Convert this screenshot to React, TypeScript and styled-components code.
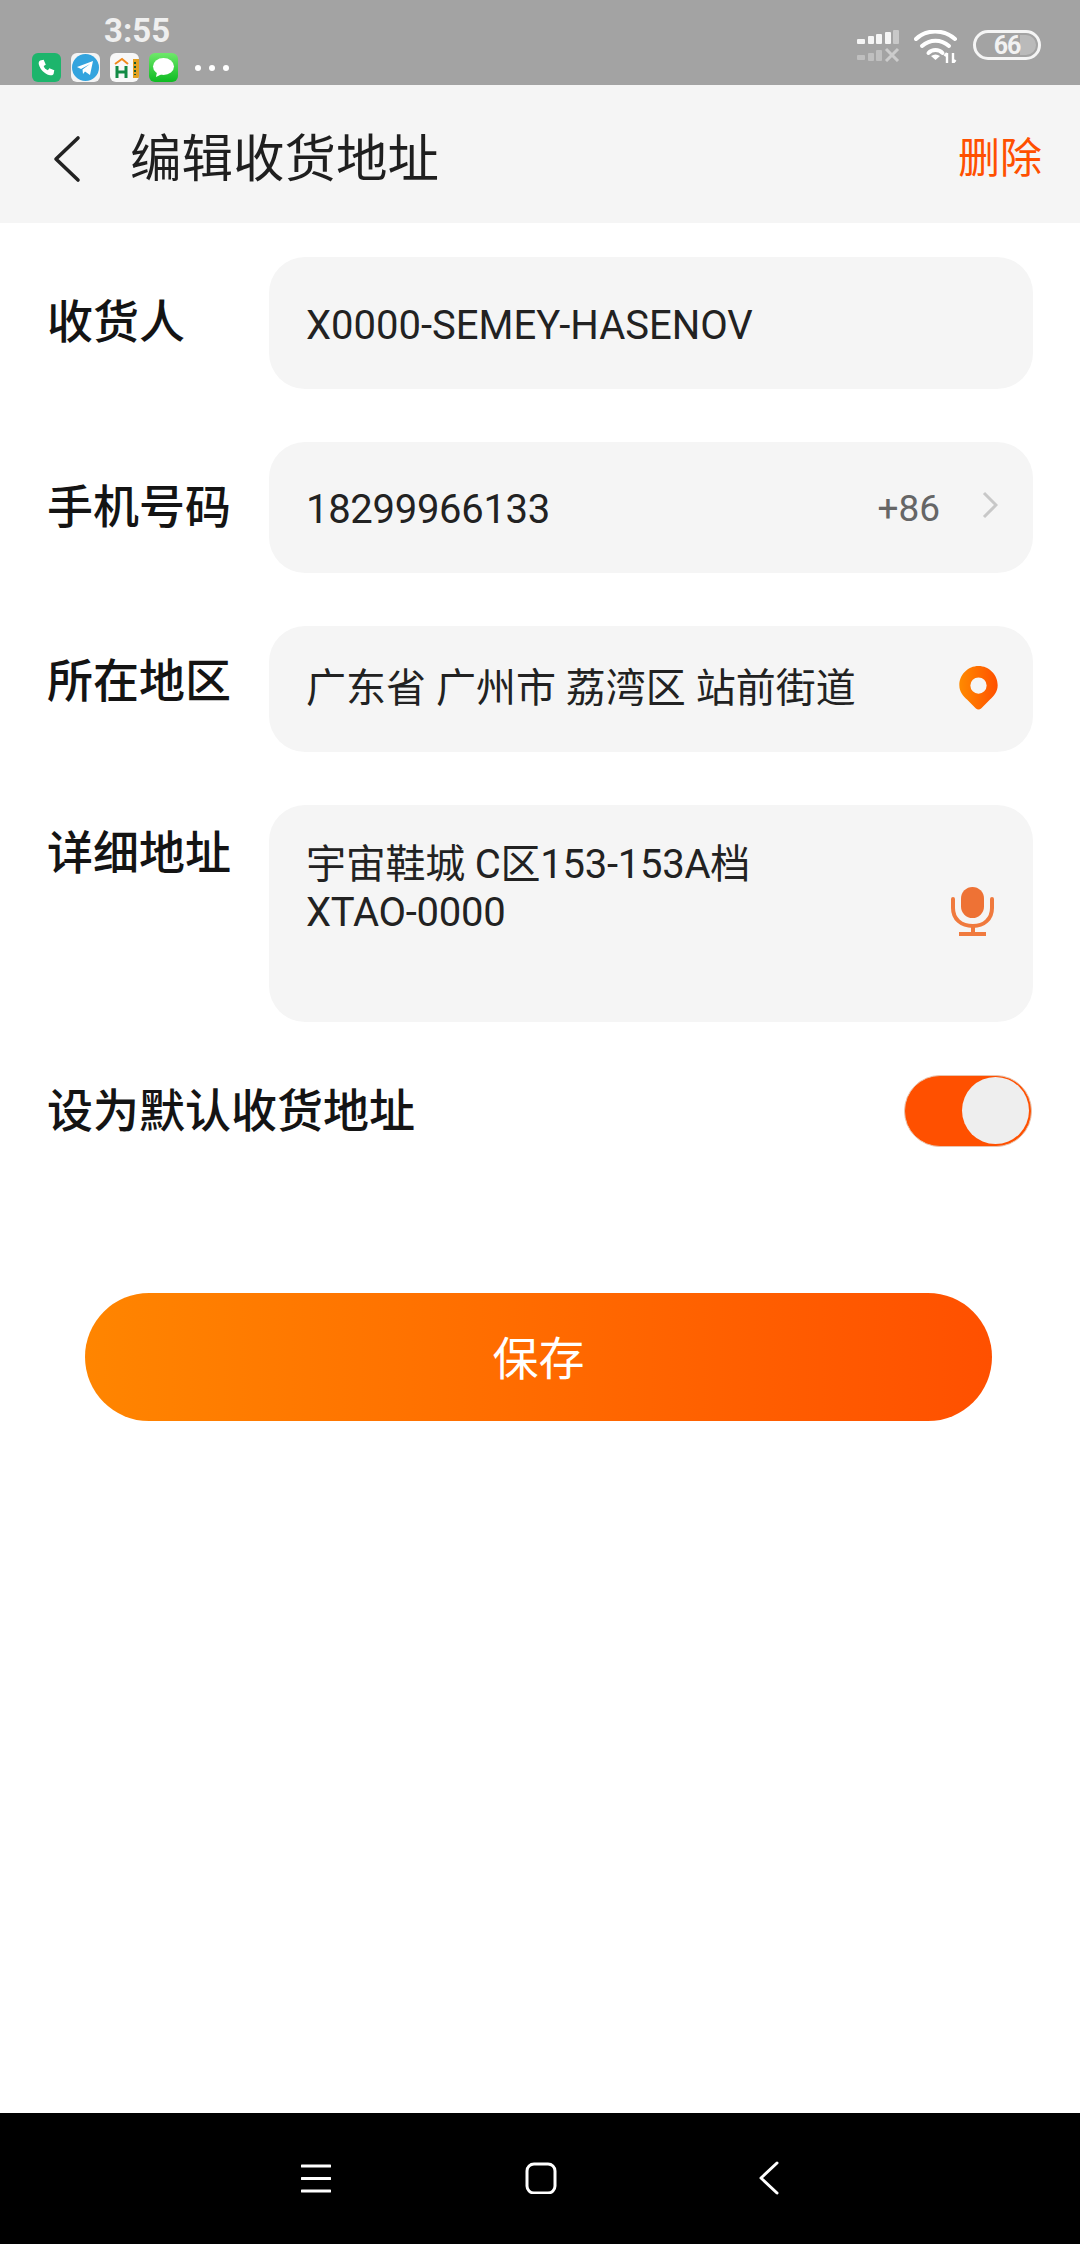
import React from 'react'
import styled, { createGlobalStyle } from 'styled-components'

const GlobalStyle = createGlobalStyle`
  html, body {
    margin: 0;
    padding: 0;
    background: #fff;
  }
  * {
    box-sizing: border-box;
  }
`

const cjk = `Roboto, 'Noto Sans CJK SC', sans-serif`

const Page = styled.div`
  width: 1080px;
  height: 2244px;
  display: flex;
  flex-direction: column;
  background: #fff;
  font-family: ${cjk};
  overflow: hidden;
`

const StatusBar = styled.div`
  height: 85px;
  flex: none;
  background: #a3a3a3;
  display: flex;
  justify-content: space-between;
  padding: 14px 39px 3px 32px;
`

const StatusLeft = styled.div`
  display: flex;
  flex-direction: column;
  gap: 5px;
`

const Clock = styled.div`
  font-size: 33px;
  line-height: 34px;
  font-weight: 700;
  color: #efefef;
  margin-left: 72px;
`

const AppIcons = styled.div`
  display: flex;
  align-items: center;
  gap: 10px;
`

const AppIcon = styled.div<{ $bg: string }>`
  width: 29px;
  height: 29px;
  border-radius: 6px;
  background: ${(p) => p.$bg};
  overflow: hidden;
  display: flex;
  align-items: center;
  justify-content: center;
`

const Dots = styled.div`
  display: flex;
  gap: 8px;
  margin-left: 7px;
`

const Dot = styled.span`
  width: 6px;
  height: 6px;
  border-radius: 50%;
  background: #fff;
`

const StatusRight = styled.div`
  display: flex;
  align-items: flex-start;
  gap: 14px;
  padding-top: 16px;
`

const Battery = styled.div`
  position: relative;
  width: 68px;
  height: 30px;
  margin-left: 1px;
  border: 3px solid #f5f5f5;
  border-radius: 15px;
  overflow: hidden;
  display: flex;
  align-items: center;
  justify-content: center;
  color: #f2f2f2;
  font-size: 25px;
  font-weight: 700;
  letter-spacing: -1px;
  &::after {
    content: '';
    position: absolute;
    left: 44px;
    right: 2px;
    top: 2px;
    bottom: 2px;
    border-radius: 0 10px 10px 0;
    background: rgba(255, 255, 255, 0.25);
  }
`

const Header = styled.div`
  height: 138px;
  flex: none;
  background: #f5f5f5;
  display: flex;
  align-items: center;
  padding: 0 38px 0 52px;
`

const BackButton = styled.div`
  width: 78px;
  display: flex;
  align-items: center;
  padding-top: 10px;
`

const Title = styled.div`
  flex: 1;
  font-size: 51.5px;
  line-height: 60px;
  padding-top: 12px;
  color: #1f1f1f;
`

const DeleteLink = styled.div`
  font-size: 42px;
  line-height: 50px;
  padding-top: 10px;
  color: #ff5000;
`

const Form = styled.div`
  display: flex;
  flex-direction: column;
  padding: 34px 47px 0 47px;
  gap: 53px;
`

const Row = styled.div`
  display: flex;
  align-items: flex-start;
`

const Label = styled.div<{ $top: number }>`
  width: 222px;
  flex: none;
  padding-top: ${(p) => p.$top}px;
  font-size: 46px;
  line-height: 56px;
  font-weight: 500;
  color: #141414;
`

const Field = styled.div<{ $height: number; $right: number }>`
  flex: 1;
  height: ${(p) => p.$height}px;
  background: #f5f5f5;
  border-radius: 36px;
  display: flex;
  align-items: center;
  padding: 0 ${(p) => p.$right}px 0 37px;
  font-size: 40px;
  line-height: 48px;
  color: #222;
`

const FieldValue = styled.div<{ $shift?: number; $tight?: boolean }>`
  flex: 1;
  padding-top: ${(p) => p.$shift || 0}px;
  letter-spacing: ${(p) => (p.$tight ? '-0.3px' : 'normal')};
`

const AddressValue = styled.div`
  flex: 1;
  align-self: flex-start;
  padding-top: 36px;
  letter-spacing: -0.25px;
`

const CountryCode = styled.div`
  color: #666;
  font-size: 37px;
  padding-top: 2px;
  margin-right: 42px;
`

const RowArrow = styled.svg`
  display: block;
  margin-top: -5px;
`

const PinSlot = styled.div`
  display: flex;
  margin-top: -2px;
`

const MicSlot = styled.div`
  display: flex;
  margin-top: -5px;
`

const SwitchRow = styled.div`
  display: flex;
  align-items: center;
  justify-content: space-between;
  padding-right: 1px;
`

const SwitchLabel = styled.div`
  font-size: 46px;
  line-height: 56px;
  font-weight: 500;
  color: #141414;
`

const SwitchTrack = styled.div`
  position: relative;
  width: 128px;
  height: 72px;
  border-radius: 36px;
  background: #ff5000;
  border: 1px solid #e8c4ae;
`

const SwitchKnob = styled.div`
  position: absolute;
  right: 2px;
  top: 1px;
  width: 67px;
  height: 67px;
  border-radius: 50%;
  background: #eee;
`

const SaveButton = styled.div`
  margin: 146px 88px 0 85px;
  height: 128px;
  flex: none;
  border-radius: 64px;
  background: linear-gradient(90deg, #ff8500, #ff5000);
  color: #fff;
  font-size: 46px;
  padding-bottom: 4px;
  display: flex;
  align-items: center;
  justify-content: center;
`

const Spacer = styled.div`
  flex: 1;
`

const NavBar = styled.div`
  height: 131px;
  flex: none;
  background: #000;
  display: flex;
  align-items: center;
  gap: 194px;
  padding-left: 301px;
`

const NavIcon = styled.svg`
  display: block;
  margin-top: -2px;
`

const Chevron = () => (
  <svg width="30" height="48" viewBox="0 0 30 48" fill="none">
    <path d="M26 3 L4 24 L26 45" stroke="#222" strokeWidth="3.6" strokeLinecap="round" strokeLinejoin="round" />
  </svg>
)

const SignalIcon = () => (
  <svg width="43" height="32" viewBox="0 0 43 32">
    <g fill="#f5f5f5">
      <rect x="0" y="9" width="8" height="5" rx="1" />
      <rect x="11" y="6" width="6" height="8" rx="1" />
      <rect x="19" y="4" width="6" height="10" rx="1" />
      <rect x="28" y="2" width="6" height="12" rx="1" />
    </g>
    <rect x="36" y="0" width="6" height="14" rx="1" fill="#fff" opacity=".4" />
    <g fill="#fff" opacity=".3">
      <rect x="0" y="25" width="8" height="5" rx="1" />
      <rect x="11" y="23" width="6" height="8" rx="1" />
      <rect x="19" y="20" width="6" height="11" rx="1" />
    </g>
    <path d="M29 19 L41 31 M41 19 L29 31" stroke="#fff" strokeOpacity=".45" strokeWidth="3" />
  </svg>
)

const WifiIcon = () => (
  <svg width="44" height="33" viewBox="0 0 44 33" fill="none">
    <path d="M2 9 C12 -1 30 -1 41 9" stroke="#fff" strokeWidth="4" strokeLinecap="round" />
    <path d="M8 16 C16 9 27 9 35 16" stroke="#fff" strokeWidth="4" strokeLinecap="round" />
    <path d="M14.500 23 C18 19 25 19 28.500 23" stroke="#fff" strokeWidth="4" strokeLinecap="round" />
    <path d="M21.500 30 L17 26 C20 24 23 24 26 26 Z" fill="#fff" />
    <path d="M33 33 V23 M33 23 L30.500 26 M39 23 V33 L41.500 30" stroke="#fff" strokeWidth="2.400" />
  </svg>
)

const PinIcon = () => (
  <svg width="41" height="46" viewBox="0 0 42 48">
    <defs>
      <linearGradient id="pinGrad" x1="0" y1="0" x2="1" y2="0">
        <stop offset="0" stopColor="#ff8a00" />
        <stop offset="1" stopColor="#ff5000" />
      </linearGradient>
    </defs>
    <path
      fillRule="evenodd"
      fill="url(#pinGrad)"
      d="M21 1 C32 1 41 10 41 21 C41 28 37 32 33 36 L24 45 C22 47 20 47 18 45 L9 36 C5 32 1 28 1 21 C1 10 10 1 21 1 Z M21 13 A8.500 8.500 0 1 0 21 30 A8.500 8.500 0 1 0 21 13 Z"
    />
  </svg>
)

const MicIcon = () => (
  <svg width="44" height="50" viewBox="0 0 44 50" fill="none">
    <rect x="10" y="1" width="23" height="31" rx="11.500" fill="#ee7235" />
    <path d="M2 13 V22 C2 33 10 40 22 40 C33 40 41 33 41 22 V13" stroke="#f07a3e" strokeWidth="4" strokeLinecap="round" />
    <path d="M22 40 V48" stroke="#f07a3e" strokeWidth="4" />
    <path d="M8 48 H35" stroke="#f07a3e" strokeWidth="4" />
  </svg>
)

const App: React.FC = () => {
  return (
    <Page>
      <GlobalStyle />
      <StatusBar>
        <StatusLeft>
          <Clock>3:55</Clock>
          <AppIcons>
            <AppIcon $bg="#1db56c">
              <svg width="17" height="17" viewBox="0 0 24 24" fill="#fff">
                <path d="M3 2 L8 1 L11 8 L8 10 C9 13 11 15 14 16 L16 13 L23 16 L22 21 C21 23 19 23 17 23 C9 21 3 15 1 7 C1 5 1 3 3 2 Z" />
              </svg>
            </AppIcon>
            <AppIcon $bg="#f4f4f4">
              <svg width="27" height="27" viewBox="0 0 27 27">
                <circle cx="13.500" cy="13.500" r="13.500" fill="#33a4de" />
                <path d="M5 13 L21 7 L18 21 L13 17.500 L11 20 L10.500 15.500 L18 10 L9 15 Z" fill="#fff" />
              </svg>
            </AppIcon>
            <AppIcon $bg="#f8f8f8">
              <svg width="29" height="29" viewBox="0 0 29 29" fill="none">
                <path d="M5 11 L12 6 L18 11" stroke="#f08a1d" strokeWidth="2" />
                <path d="M7 13 V25 M16 13 V25 M7 19 H16" stroke="#128a45" strokeWidth="3" />
                <rect x="23" y="6" width="6" height="19" fill="#e3a020" />
                <path d="M25 9 V22" stroke="#1a5c2e" strokeWidth="2" strokeDasharray="2 2" />
              </svg>
            </AppIcon>
            <AppIcon $bg="linear-gradient(180deg, #6fe86a, #0dbb22)">
              <svg width="23" height="21" viewBox="0 0 23 21">
                <ellipse cx="11.500" cy="9.500" rx="10.500" ry="8.500" fill="#fff" />
                <path d="M5 15 L4 20 L10 17 Z" fill="#fff" />
              </svg>
            </AppIcon>
            <Dots>
              <Dot />
              <Dot />
              <Dot />
            </Dots>
          </AppIcons>
        </StatusLeft>
        <StatusRight>
          <SignalIcon />
          <WifiIcon />
          <Battery>66</Battery>
        </StatusRight>
      </StatusBar>

      <Header>
        <BackButton>
          <Chevron />
        </BackButton>
        <Title>编辑收货地址</Title>
        <DeleteLink>删除</DeleteLink>
      </Header>

      <Form>
        <Row>
          <Label $top={37}>收货人</Label>
          <Field $height={132} $right={37}>
            <FieldValue $shift={6}>X0000-SEMEY-HASENOV</FieldValue>
          </Field>
        </Row>
        <Row>
          <Label $top={37}>手机号码</Label>
          <Field $height={131} $right={35}>
            <FieldValue $shift={4} $tight>18299966133</FieldValue>
            <CountryCode>+86</CountryCode>
            <RowArrow width="16" height="28" viewBox="0 0 16 28" fill="none">
              <path d="M2 2 L14 14 L2 26" stroke="#c8c8c8" strokeWidth="3" />
            </RowArrow>
          </Field>
        </Row>
        <Row>
          <Label $top={27}>所在地区</Label>
          <Field $height={126} $right={34}>
            <FieldValue>广东省 广州市 荔湾区 站前街道</FieldValue>
            <PinSlot>
              <PinIcon />
            </PinSlot>
          </Field>
        </Row>
        <Row>
          <Label $top={20}>详细地址</Label>
          <Field $height={217} $right={38}>
            <AddressValue>
              宇宙鞋城 C区153-153A档
              <br />
              XTAO-0000
            </AddressValue>
            <MicSlot>
              <MicIcon />
            </MicSlot>
          </Field>
        </Row>
        <SwitchRow>
          <SwitchLabel>设为默认收货地址</SwitchLabel>
          <SwitchTrack>
            <SwitchKnob />
          </SwitchTrack>
        </SwitchRow>
      </Form>

      <SaveButton>保存</SaveButton>
      <Spacer />

      <NavBar>
        <NavIcon width="30" height="30" viewBox="0 0 30 30" fill="none">
          <path d="M1 3 H29 M1 15.500 H29 M1 28 H29" stroke="#fff" strokeWidth="3" strokeLinecap="round" />
        </NavIcon>
        <NavIcon width="32" height="32" viewBox="0 0 32 32" fill="none">
          <rect x="2" y="2" width="28" height="29" rx="7" stroke="#fff" strokeWidth="3" />
        </NavIcon>
        <NavIcon width="30" height="34" viewBox="0 0 30 34" fill="none">
          <path d="M26 2 L10 17 L26 32" stroke="#fff" strokeWidth="3" strokeLinecap="round" strokeLinejoin="round" />
        </NavIcon>
      </NavBar>
    </Page>
  )
}

export default App
